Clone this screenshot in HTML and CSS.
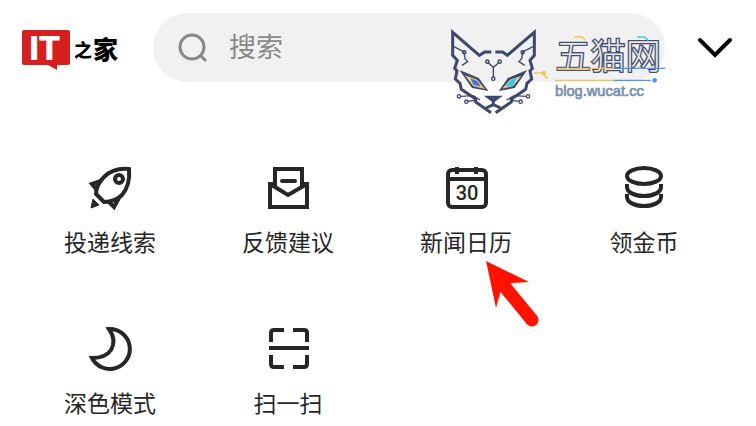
FILE: index.html
```html
<!DOCTYPE html>
<html lang="zh-CN">
<head>
    <meta charset="UTF-8">
    <meta name="viewport" content="width=device-width, initial-scale=1.0">
    <title>IT之家</title>
    <link rel="stylesheet" href="styles.css">
</head>
<body>
    <header class="header">
        <a class="logo" href="#" aria-label="IT之家">
            <svg viewBox="0 0 100 49" width="100" height="49">
                <path class="logo-box" d="M3 7H47Q49 7 49 9V40Q49 42 47 42H36V47L27 42H3Q1 42 1 40V9Q1 7 3 7Z"/>
                <text class="logo-it" x="8" y="37">IT</text>
                <text class="logo-zh" x="53" y="34" font-size="18">之</text>
                <text class="logo-zh" x="72" y="36" font-size="25">家</text>
            </svg>
        </a>
        <div class="search">
            <svg viewBox="0 0 32 32" width="32" height="32">
                <circle cx="15" cy="15" r="12"/>
                <path d="M24 24L29 29"/>
            </svg>
            <input type="text" class="search-input" placeholder="搜索" aria-label="搜索">
        </div>
        <button class="toggle" aria-label="展开">
            <svg viewBox="0 0 36 24" width="36" height="24">
                <path d="M3 4L18 19L33 4"/>
            </svg>
        </button>

        <svg class="watermark" viewBox="0 0 675 300">
            <!-- cat head -->
            <g class="cat">
                <path class="thick" d="M154 96H134L118 106L38 37V106L52 121L44 145L51 153L46 177L60 190L64 208L107 237V246L153 278"/>
                <path class="thick" d="M166 96H188L202 106L283 37V106L270 121L277 145L270 153L275 177L261 190L257 208L214 237V246L167 278"/>
                <path d="M42 80L72 96L75 116L83 125L66 136M279 80L248 96L245 116L237 125L254 136"/>
                <path d="M143 127L160 142L178 127M160 142V170M62 229L100 227L120 240M84 244L110 240M258 229L222 227L200 240M236 244L210 240"/>
                <path class="thick" d="M145 232H175L160 243ZM160 240V254L138 264M160 254L182 264"/>
                <path class="eye" d="M68 158L114 177L137 208L98 201Z"/>
                <path class="eye" d="M252 158L206 177L184 208L222 201Z"/>
                <circle cx="73" cy="97" r="5"/>
                <circle cx="248" cy="97" r="5"/>
                <circle cx="142" cy="125" r="5"/>
                <circle cx="179" cy="125" r="5"/>
                <circle cx="160" cy="176" r="5"/>
                <circle cx="57" cy="229" r="5"/>
                <circle cx="79" cy="245" r="5"/>
                <circle cx="264" cy="229" r="5"/>
                <circle cx="242" cy="245" r="5"/>
            </g>
            <path class="iris-left" d="M80 170L110 180L130 204L101 197Z"/>
            <path class="iris-right" d="M241 170L210 180L190 204L219 197Z"/>
            <path class="pupil-left" d="M92 177L110 183L121 198L102 194Z"/>
            <path class="pupil-right" d="M228 177L211 183L200 198L218 194Z"/>

            <text class="mark-name" x="347" y="148">五猫网</text>
            <g class="trace">
                <path class="yellow" d="M282 159H308M308 164L315 167L318 174H324M402 51H426L436 61M352 145H520M345 181H520"/>
                <path class="cyan" d="M591 51H614L624 61"/>
                <path class="blue" d="M520 145H675M520 181H632"/>
            </g>
            <circle class="dot-yellow" cx="311" cy="159" r="7"/>
            <circle class="dot-blue" cx="644" cy="181" r="7"/>
            <text class="mark-url" x="345" y="229">blog.wucat.cc</text>
        </svg>
    </header>

    <main class="menu">
        <a class="menu-item" href="#">
            <svg class="icon" viewBox="0 0 48 48">
                <path d="M43 5C32 4 24 7 18 13C12 19 10 24 10 30L18 38C26 38 32 35 36 31C42 24 44 16 43 5Z"/>
                <circle cx="33" cy="15" r="4"/>
                <path d="M15 17L6 20L10 25M23 38L28 43L33 34"/>
                <path class="solid" d="M7 35L5 44L13 41Z"/>
            </svg>
            <span>投递线索</span>
        </a>
        <a class="menu-item" href="#">
            <svg class="icon" viewBox="0 0 48 48">
                <path d="M11 20H6V43H43V20H38M11 23V5H38V23M6 20L24 31L43 20"/>
                <path d="M18 17H31" stroke-linecap="round"/>
            </svg>
            <span>反馈建议</span>
        </a>
        <div class="menu-cell">
            <a class="menu-item" href="#">
                <svg class="icon" viewBox="0 0 48 48">
                    <rect x="6" y="6" width="38" height="37" rx="4"/>
                    <path d="M6 15H44M15 3V10M34 3V10"/>
                    <text class="day" x="25" y="36">30</text>
                </svg>
                <span>新闻日历</span>
            </a>
            <svg class="pointer" viewBox="0 0 60 70" width="60" height="70">
                <path d="M6 3L49 24L32 25L21 32L16 50Z"/>
                <path class="pointer-tail" d="M24 28L52 62"/>
            </svg>
        </div>
        <a class="menu-item" href="#">
            <svg class="icon" viewBox="0 0 48 48">
                <ellipse cx="24" cy="12" rx="17" ry="8"/>
                <path d="M7 20V23C7 28 14 32 24 32S41 28 41 23V20M7 30V33C7 38 14 42 24 42S41 38 41 33V30"/>
            </svg>
            <span>领金币</span>
        </a>
        <a class="menu-item" href="#">
            <svg class="icon" viewBox="0 0 48 48">
                <path d="M23 4A20 20 0 1 1 6 33C15 33 21 31 25 25C29 18 28 11 23 4Z"/>
            </svg>
            <span>深色模式</span>
        </a>
        <a class="menu-item" href="#">
            <svg class="icon" viewBox="0 0 48 48">
                <path d="M7 17V8Q7 5 10 5H20M29 5H40Q43 5 43 8V17M43 30V39Q43 42 40 42H29M20 42H10Q7 42 7 39V30M5 23H45"/>
            </svg>
            <span>扫一扫</span>
        </a>
    </main>
</body>
</html>
```

FILE: styles.css
```css
* { box-sizing: border-box; }
body { margin: 0; background: #fff; color: #262626; font-family: "Noto Sans CJK SC", sans-serif; }
svg { display: block; flex: none; fill: none; }
a { color: inherit; text-decoration: none; }

.header { position: relative; display: flex; align-items: center; gap: 32px; padding: 13px 23px 0 21px; }
.logo-box { fill: #d6201f; }
.logo-it { fill: #fff; font-family: Roboto, sans-serif; font-size: 34px; font-weight: 900; }
.logo-zh { fill: #000; font-weight: 900; }

.search { flex: 1; min-width: 0; display: flex; align-items: center; gap: 20px; height: 69px; padding: 0 24px; border-radius: 35px; background: #f1f1f1; }
.search svg { stroke: #888; stroke-width: 3; }
.search-input { flex: 1; min-width: 0; padding: 0 0 4px; border: 0; outline: 0; background: none; font-family: inherit; font-size: 27px; color: #333; }
.search-input::placeholder { color: #888; opacity: 1; }
.toggle { padding: 0; border: 0; background: none; }
.toggle path { stroke: #000; stroke-width: 4; stroke-linecap: round; }

.watermark { position: absolute; top: 20px; right: 91px; width: 225px; height: 100px; pointer-events: none; overflow: visible; }
.cat { stroke: #3d4770; stroke-width: 4; }
.cat .thick { stroke-width: 9; }
.cat .eye { fill: #3d4770; stroke-width: 7; }
.iris-left { fill: #fff; stroke: #eebf58; stroke-width: 4; }
.iris-right { fill: #fff; stroke: #eebf58; stroke-width: 3; }
.pupil-left { fill: #3e6fe0; stroke: #3e6fe0; stroke-width: 2; }
.pupil-right { fill: #35c8ee; stroke: #35c8ee; stroke-width: 4; }
.mark-name { fill: #e6e8ec; stroke: #464e6b; stroke-width: 8; paint-order: stroke; font-size: 105px; font-weight: 300; }
.mark-url { fill: #8fa7c4; stroke: #7188a8; stroke-width: 2; font-family: "Liberation Sans", sans-serif; font-size: 44px; }
.trace { stroke-width: 4; }
.yellow { stroke: #f3c44f; }
.cyan { stroke: #3fcbee; }
.blue { stroke: #4d97ef; }
.dot-yellow { fill: #f3c44f; }
.dot-blue { fill: #4d97ef; }

.menu { display: grid; grid-template-columns: repeat(4, 1fr); row-gap: 69px; padding: 82px 23px 7px 21px; }
.menu-cell { position: relative; }
.menu-item { display: flex; flex-direction: column; align-items: center; gap: 14px; font-size: 23px; line-height: 30px; }
.icon { width: 48px; height: 48px; stroke: #262626; stroke-width: 4; }
.icon .solid { fill: #262626; stroke-width: 1; }
.day { fill: #262626; stroke: none; font-family: Roboto, sans-serif; font-size: 20px; font-weight: 500; text-anchor: middle; }
.pointer { position: absolute; top: 94px; left: calc(50% + 14px); fill: #ff1200; }
.pointer-tail { stroke: #ff1200; stroke-width: 13; stroke-linecap: round; }
```
